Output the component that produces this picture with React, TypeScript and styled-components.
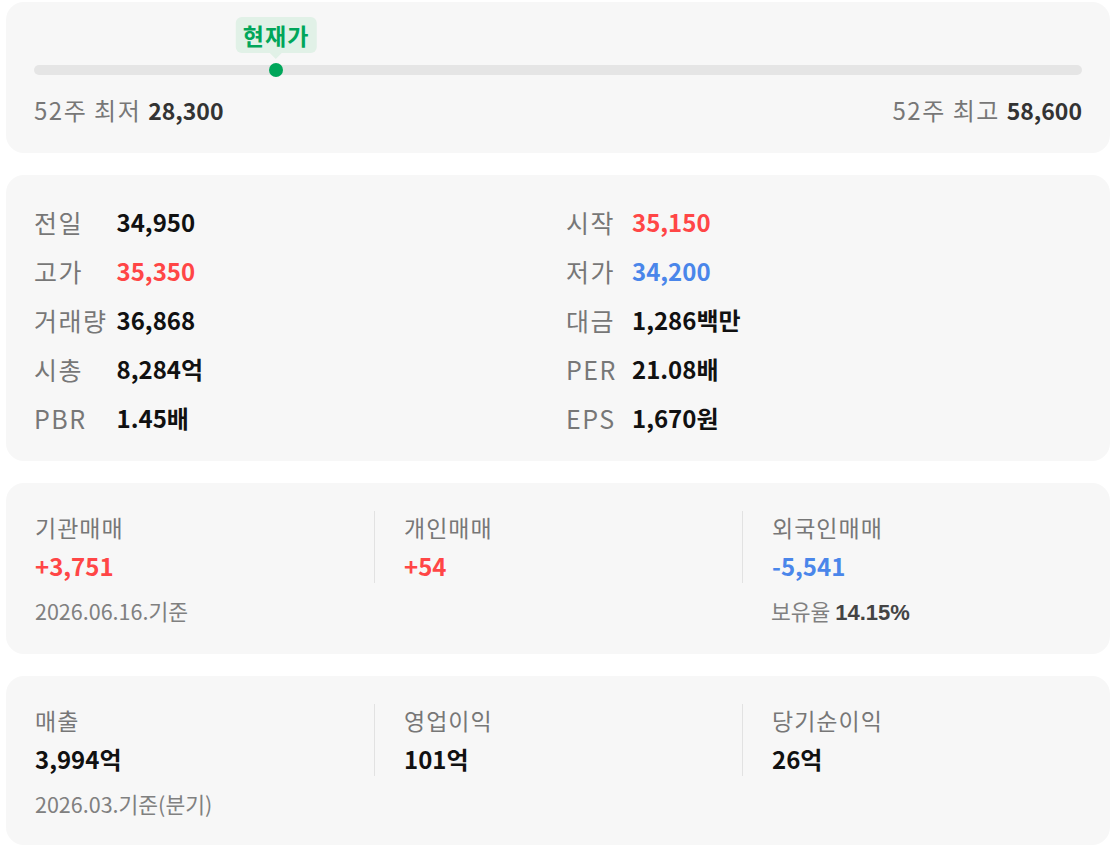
import React from 'react';
import styled, { createGlobalStyle } from 'styled-components';

const GlobalStyle = createGlobalStyle`
  html, body {
    margin: 0;
    padding: 0;
    background: #ffffff;
  }
  body {
    font-family: 'Noto Sans CJK KR', 'Noto Sans', sans-serif;
    color: #111111;
  }
`;

type Tone = 'up' | 'down' | 'plain';

const toneColor = (tone: Tone = 'plain') => {
  if (tone === 'up') return '#ff4646';
  if (tone === 'down') return '#4a86ea';
  return '#111111';
};

const Page = styled.div`
  display: flex;
  flex-direction: column;
  gap: 22px;
  padding: 2px 5px 3px 6px;
`;

const Card = styled.section`
  background: #f7f7f7;
  border-radius: 18px;
`;

const RangeCard = styled(Card)`
  padding: 0 28px 27px;
`;

const SliderArea = styled.div`
  padding-top: 63px;
`;

const Track = styled.div`
  position: relative;
  height: 10px;
  border-radius: 5px;
  background: #e5e5e5;
`;

const Dot = styled.span`
  position: absolute;
  top: 50%;
  width: 14px;
  height: 14px;
  border-radius: 50%;
  background: #00a65a;
  transform: translate(-50%, -50%);
`;

const Badge = styled.span`
  position: absolute;
  bottom: calc(100% + 12px);
  transform: translateX(-50%);
  height: 36px;
  padding: 0 7px;
  display: flex;
  align-items: center;
  border-radius: 6px;
  background: #e1f1e7;
  color: #00a65a;
  font-size: 23px;
  letter-spacing: 1px;
  font-weight: 700;
  white-space: nowrap;

  &::after {
    content: '';
    position: absolute;
    left: 50%;
    top: 100%;
    transform: translateX(-50%);
    border-left: 6px solid transparent;
    border-right: 6px solid transparent;
    border-top: 6px solid #e1f1e7;
  }
`;

const RangeLabels = styled.div`
  display: flex;
  justify-content: space-between;
  margin-top: 19px;
  line-height: 32px;
`;

const RangeText = styled.span`
  font-size: 24px;
  letter-spacing: 1.5px;
  color: #777777;

  strong {
    font-size: 23px;
    letter-spacing: 0;
    color: #333333;
    font-weight: 700;
  }
`;

const StatsCard = styled(Card)`
  padding: 31px 28px 27px;
  display: grid;
  grid-template-columns: 1fr 1fr;
  column-gap: 16px;
`;

const StatColumn = styled.dl`
  margin: 0;
  display: grid;
  grid-template-columns: minmax(57px, max-content) 1fr;
  column-gap: 9px;
  row-gap: 17px;
  line-height: 32px;
  align-content: start;
`;

const StatLabel = styled.dt`
  font-size: 25px;
  letter-spacing: 1.5px;
  color: #777777;
  white-space: nowrap;
`;

const StatValue = styled.dd<{ $tone?: Tone }>`
  margin: 0;
  font-size: 24px;
  font-weight: 700;
  color: ${(p) => toneColor(p.$tone)};
`;

const FlowCard = styled(Card)`
  padding: 28px 0 26px;
  display: grid;
  grid-template-columns: repeat(3, 1fr);
`;

const FlowColumn = styled.div`
  display: flex;
  flex-direction: column;
`;

const FlowInner = styled.div<{ $divider?: boolean }>`
  padding-left: 29px;
  border-left: ${(p) => (p.$divider ? '1px solid #e2e2e2' : 'none')};
`;

const FlowLabel = styled.div`
  font-size: 23px;
  letter-spacing: 1px;
  line-height: 32px;
  color: #777777;
`;

const FlowValue = styled.div<{ $tone?: Tone }>`
  margin-top: 6px;
  font-size: 24px;
  line-height: 34px;
  font-weight: 700;
  color: ${(p) => toneColor(p.$tone)};
`;

const FlowNote = styled.div`
  margin-top: 13px;
  padding-left: 29px;
  font-size: 21.5px;
  line-height: 30px;
  color: #808080;

  strong {
    font-family: 'Liberation Sans', Arial, sans-serif;
    font-size: 22px;
    font-weight: 700;
    color: #444444;
  }
`;

interface Stat {
  label: string;
  value: string;
  tone?: Tone;
}

interface Flow {
  label: string;
  value: string;
  tone?: Tone;
  note?: React.ReactNode;
}

const leftStats: Stat[] = [
  { label: '전일', value: '34,950' },
  { label: '고가', value: '35,350', tone: 'up' },
  { label: '거래량', value: '36,868' },
  { label: '시총', value: '8,284억' },
  { label: 'PBR', value: '1.45배' },
];

const rightStats: Stat[] = [
  { label: '시작', value: '35,150', tone: 'up' },
  { label: '저가', value: '34,200', tone: 'down' },
  { label: '대금', value: '1,286백만' },
  { label: 'PER', value: '21.08배' },
  { label: 'EPS', value: '1,670원' },
];

const trading: Flow[] = [
  { label: '기관매매', value: '+3,751', tone: 'up', note: '2026.06.16.기준' },
  { label: '개인매매', value: '+54', tone: 'up' },
  {
    label: '외국인매매',
    value: '-5,541',
    tone: 'down',
    note: (
      <>
        보유율 <strong>14.15%</strong>
      </>
    ),
  },
];

const earnings: Flow[] = [
  { label: '매출', value: '3,994억', note: '2026.03.기준(분기)' },
  { label: '영업이익', value: '101억' },
  { label: '당기순이익', value: '26억' },
];

const LOW = 28300;
const HIGH = 58600;
const CURRENT = 35300;

function StatList({ items }: { items: Stat[] }) {
  return (
    <StatColumn>
      {items.map((s) => (
        <React.Fragment key={s.label}>
          <StatLabel>{s.label}</StatLabel>
          <StatValue $tone={s.tone}>{s.value}</StatValue>
        </React.Fragment>
      ))}
    </StatColumn>
  );
}

function FlowRow({ items }: { items: Flow[] }) {
  return (
    <FlowCard>
      {items.map((f, i) => (
        <FlowColumn key={f.label}>
          <FlowInner $divider={i > 0}>
            <FlowLabel>{f.label}</FlowLabel>
            <FlowValue $tone={f.tone}>{f.value}</FlowValue>
          </FlowInner>
          {f.note && <FlowNote>{f.note}</FlowNote>}
        </FlowColumn>
      ))}
    </FlowCard>
  );
}

export default function App() {
  const pos = ((CURRENT - LOW) / (HIGH - LOW)) * 100;

  return (
    <Page>
      <GlobalStyle />
      <RangeCard>
        <SliderArea>
          <Track>
            <Badge style={{ left: `${pos}%` }}>현재가</Badge>
            <Dot style={{ left: `${pos}%` }} />
          </Track>
        </SliderArea>
        <RangeLabels>
          <RangeText>
            52주 최저 <strong>28,300</strong>
          </RangeText>
          <RangeText>
            52주 최고 <strong>58,600</strong>
          </RangeText>
        </RangeLabels>
      </RangeCard>

      <StatsCard>
        <StatList items={leftStats} />
        <StatList items={rightStats} />
      </StatsCard>

      <FlowRow items={trading} />
      <FlowRow items={earnings} />
    </Page>
  );
}
